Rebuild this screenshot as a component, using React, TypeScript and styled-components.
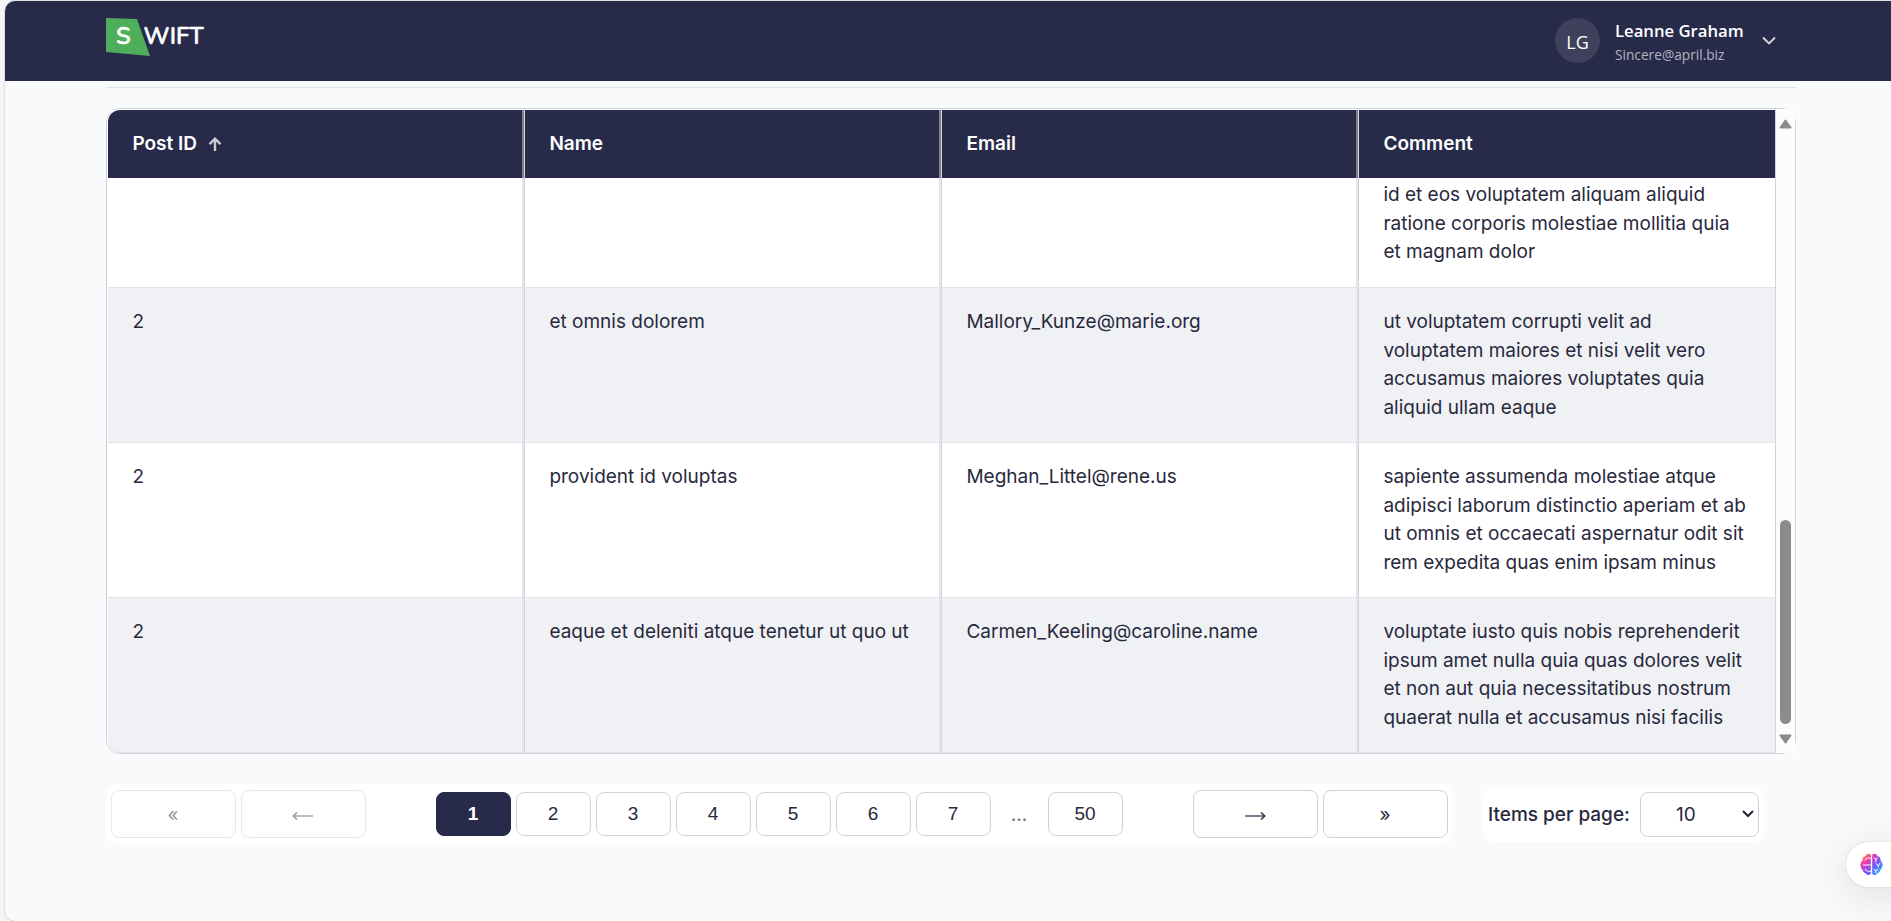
import React from "react";
import styled, { createGlobalStyle } from "styled-components";

const inter = `Inter, "Liberation Sans", sans-serif`;
const segoe = `"Open Sans", "Noto Sans", sans-serif`;

const GlobalStyle = createGlobalStyle`
  * { box-sizing: border-box; }
  html, body { margin: 0; background: #f7f7f8; overflow: hidden; }
  body { font-family: ${inter}; color: #28293d; }
`;

const Shell = styled.div`
  height: 921px;
  padding: 1px 0 0 5px;
  background: #f5f5f6;
  overflow: hidden;
`;

const Page = styled.div`
  position: relative;
  height: 920px;
  background: #f9fafc;
  border-radius: 10px 0 0 10px;
  box-shadow: 0 0 2px rgba(0, 0, 0, 0.3);
  overflow: hidden;
`;

const Header = styled.header`
  height: 80px;
  padding: 0 115px 0 101px;
  background: #282a4a;
  display: flex;
  justify-content: space-between;
`;

const Logo = styled.svg`
  margin-top: 16px;
  display: block;
`;

const LogoText = styled.text`
  font: 600 23.5px Nunito, Lato, sans-serif;
  fill: #fff;
  stroke: #fff;
  stroke-width: 0.5px;
`;

const Profile = styled.div`
  display: flex;
  align-items: center;
  height: 79px;
`;

const Avatar = styled.div`
  width: 45px;
  height: 45px;
  border-radius: 50%;
  background: #3e405c;
  color: #fff;
  font: 18px/48px ${segoe};
  text-align: center;
`;

const Identity = styled.div`
  width: 147px;
  margin-left: 15px;
  padding-top: 5px;
  white-space: nowrap;
`;

const UserName = styled.div`
  font: 600 16.7px/24px ${segoe};
  color: #fff;
`;

const UserMail = styled.div`
  font: 13.7px/24px ${segoe};
  color: #b3b4c0;
`;

const Main = styled.main`
  width: 1690px;
  margin: 6px 0 0 101px;
`;

const Rule = styled.div`
  height: 1px;
  background: #e1e2ea;
`;

const TableFrame = styled.div`
  margin-top: 20px;
  height: 646px;
  border: 1px solid #d1d2da;
  border-radius: 14px;
  display: flex;
`;

const Grid = styled.div`
  width: 1669px;
  padding: 1px 0 0 1px;
  border-right: 1px solid #d1d2da;
  border-radius: 13px 0 0 13px;
  background: #fff;
  overflow: hidden;
`;

const HeadRow = styled.div`
  display: grid;
  grid-template-columns: repeat(4, 417px);
  height: 68px;
  border-top-left-radius: 12px;
  background: #282a4a;
`;

const Row = styled.div<{ $shade?: boolean; $height: number }>`
  display: grid;
  grid-template-columns: repeat(4, 417px);
  height: ${(p) => p.$height}px;
  background: ${(p) => (p.$shade ? "#f0f1f5" : "#fff")};
  border-bottom: 1px solid #e2e3e9;
  &:last-child {
    border-bottom-left-radius: 12px;
  }
`;

const HeadCell = styled.div`
  display: flex;
  align-items: center;
  gap: 11px;
  padding: 0 24.4px 1px;
  font-size: 19px;
  font-weight: 600;
  color: #fff;
  &:not(:last-child) {
    border-right: 1px solid #d5d6dd;
    box-shadow: inset -2px 0 #808190;
  }
`;

const Cell = styled.div<{ $tail?: boolean }>`
  padding: ${(p) => (p.$tail ? "3px" : "20px")} 0 0 24.4px;
  font-size: 19px;
  line-height: 28.5px;
  white-space: pre;
  &:not(:last-child) {
    border-right: 1px solid #d1d2da;
    box-shadow: inset -2px 0 #e5e6eb;
  }
`;

const ScrollTrack = styled.div`
  flex: 1;
  display: flex;
  flex-direction: column;
  align-items: center;
  padding: 10px 0 9px;
  background: #fcfcfc;
`;

const Arrow = styled.svg`
  display: block;
  width: 13px;
  height: 10px;
`;

const Thumb = styled.div`
  width: 11px;
  height: 204px;
  margin: auto 0 10px;
  border-radius: 6px;
  background: #8b8b8b;
`;

const Footer = styled.div`
  display: flex;
  align-items: center;
  margin-top: 30px;
`;

const Pager = styled.nav`
  width: 1346px;
  height: 60px;
  padding: 0 4px 0 5px;
  border-radius: 10px;
  background: #fff;
  display: flex;
  align-items: center;
  justify-content: space-between;
`;

const Group = styled.div`
  display: flex;
  align-items: center;
  gap: 5px;
`;

const StepButton = styled.button<{ $off?: boolean }>`
  width: 125px;
  height: 48px;
  padding: 0 1px 0 0;
  border: 1px solid #d1d2da;
  border-radius: 8px;
  background: #fff;
  color: #28293d;
  font: 19px ${inter};
  opacity: ${(p) => (p.$off ? 0.5 : 1)};
`;

const PageButton = styled.button<{ $active?: boolean }>`
  width: 75px;
  height: 44px;
  padding: 0 1px 1px 0;
  border: 1px solid ${(p) => (p.$active ? "#282a4a" : "#d1d2da")};
  border-radius: 8px;
  background: ${(p) => (p.$active ? "#282a4a" : "#fff")};
  color: ${(p) => (p.$active ? "#fff" : "#28293d")};
  font: ${(p) => (p.$active ? 700 : 400)} 19px "Liberation Sans", sans-serif;
`;

const Dots = styled.span`
  width: 47px;
  padding-right: 1px;
  text-align: center;
  font-size: 19px;
  color: #6c757d;
`;

const PerPage = styled.div`
  width: 281px;
  height: 55px;
  margin-left: 31px;
  padding: 0 5px;
  border-radius: 10px;
  background: #fff;
  display: flex;
  align-items: center;
  justify-content: space-between;
  font-size: 19px;
  font-weight: 500;
  white-space: nowrap;
`;

const Select = styled.div`
  width: 119px;
  height: 45px;
  padding: 0 4px 0 35px;
  border: 1px solid #d1d2da;
  border-radius: 8px;
  display: flex;
  align-items: center;
  justify-content: space-between;
  font-weight: 400;
`;

const Assistant = styled.div`
  position: absolute;
  left: 1841px;
  top: 841px;
  width: 60px;
  height: 45px;
  padding: 11px 0 0 14px;
  border-radius: 23px 0 0 23px;
  background: #fff;
  box-shadow: 0 8px 40px rgba(0, 0, 0, 0.12), 0 0 2px rgba(0, 0, 0, 0.15);
`;

const rows = [
  { id: "", name: "", email: "", height: 110, tail: true, comment: "id et eos voluptatem aliquam aliquid\nratione corporis molestiae mollitia quia\net magnam dolor" },
  { id: "2", name: "et omnis dolorem", email: "Mallory_Kunze@marie.org", height: 155, comment: "ut voluptatem corrupti velit ad\nvoluptatem maiores et nisi velit vero\naccusamus maiores voluptates quia\naliquid ullam eaque" },
  { id: "2", name: "provident id voluptas", email: "Meghan_Littel@rene.us", height: 155, comment: "sapiente assumenda molestiae atque\nadipisci laborum distinctio aperiam et ab\nut omnis et occaecati aspernatur odit sit\nrem expedita quas enim ipsam minus" },
  { id: "2", name: "eaque et deleniti atque tenetur ut quo ut", email: "Carmen_Keeling@caroline.name", height: 155, comment: "voluptate iusto quis nobis reprehenderit\nipsum amet nulla quia quas dolores velit\net non aut quia necessitatibus nostrum\nquaerat nulla et accusamus nisi facilis" },
];

const pages = ["1", "2", "3", "4", "5", "6", "7"];

const LongArrow = ({ flip }: { flip?: boolean }) => (
  <svg width="22" height="10" viewBox="0 0 22 10" fill="none" stroke="#28293d">
    <g transform={flip ? "matrix(-1 0 0 1 22 0)" : undefined}>
      <path d="M1 5H21" strokeWidth="1.2" />
      <path d="M17 1.5L20.8 5L17 8.5" strokeWidth="1.4" />
    </g>
  </svg>
);

const Brain = () => (
  <svg width="23" height="23" viewBox="0 0 24 24">
    <defs>
      <linearGradient id="brain" x1="0.1" y1="0.1" x2="0.9" y2="0.9">
        <stop offset="0" stopColor="#ff9a1f" />
        <stop offset="0.25" stopColor="#f436b4" />
        <stop offset="0.6" stopColor="#7a55f4" />
        <stop offset="1" stopColor="#25b7ff" />
      </linearGradient>
    </defs>
    <path
      fill="url(#brain)"
      d="M11.3 1.8C9.6.2 6.6.8 5.9 3 3.6 3.3 2.2 5.4 2.7 7.6 1.2 8.8.9 10 .9 11 .1 12 .1 13 .9 14 .9 15.500 1.700 16.800 2.700 17.300 2.800 19.400 4.300 20.700 6 21 7 23.300 9.900 23.700 11.300 22ZM12.700 1.800C14.400.200 17.400.800 18.100 3 20.400 3.300 21.800 5.400 21.300 7.600 22.800 8.800 23.100 10 23.100 11 23.900 12 23.900 13 23.100 14 23.100 15.500 22.300 16.800 21.300 17.300 21.200 19.400 19.700 20.700 18 21 17 23.300 14.100 23.700 12.700 22Z"
    />
    <path
      fill="none"
      stroke="#fff"
      strokeWidth="1"
      strokeLinecap="round"
      d="M5.500 7.500C6 5.500 8 4.500 11 5.500M3.500 12.500H11M5.500 17C6 19 8 19.500 11 19M15 5L16.500 7L18 5M16.500 7V9M16.500 11L19 13L21 10.500M19 13V14.500M14.500 17L16.500 18.500L18.500 17M16.500 18.500V20.500"
    />
  </svg>
);

export default function App() {
  return (
    <>
      <GlobalStyle />
      <Shell>
        <Page>
          <Header>
            <Logo width="110" height="42" viewBox="0 0 110 42">
              <path d="M0 1L31 2L44 39L0 35Z" fill="#4fae5a" />
              <LogoText x="10" y="27.3">S</LogoText>
              <LogoText x="37.6" y="27.3" textLength="60">WIFT</LogoText>
            </Logo>
            <Profile>
              <Avatar>LG</Avatar>
              <Identity>
                <UserName>Leanne Graham</UserName>
                <UserMail>Sincere@april.biz</UserMail>
              </Identity>
              <svg width="14" height="9" viewBox="0 0 14 9" fill="none" stroke="#d8d8df" strokeWidth="1.8">
                <path d="M1 1.500L7 7.500L13 1.500" />
              </svg>
            </Profile>
          </Header>
          <Main>
            <Rule />
            <TableFrame>
              <Grid>
                <HeadRow>
                  <HeadCell>
                    Post ID
                    <svg width="14" height="14" viewBox="0 0 14 14" fill="none" stroke="#c9cad2" strokeWidth="2.400">
                      <path d="M7 14V2M1.500 7.200L7 1.700L12.500 7.200" />
                    </svg>
                  </HeadCell>
                  <HeadCell>Name</HeadCell>
                  <HeadCell>Email</HeadCell>
                  <HeadCell>Comment</HeadCell>
                </HeadRow>
                {rows.map((r, i) => (
                  <Row key={i} $shade={i % 2 === 1} $height={r.height}>
                    <Cell>{r.id}</Cell>
                    <Cell>{r.name}</Cell>
                    <Cell>{r.email}</Cell>
                    <Cell $tail={r.tail}>{r.comment}</Cell>
                  </Row>
                ))}
              </Grid>
              <ScrollTrack>
                <Arrow viewBox="0 0 13 10">
                  <path d="M6.500 1.500L11.500 8.500H1.500Z" fill="#8b8b8b" stroke="#8b8b8b" strokeWidth="2" strokeLinejoin="round" />
                </Arrow>
                <Thumb />
                <Arrow viewBox="0 0 13 10">
                  <path d="M6.500 8.500L11.500 1.500H1.500Z" fill="#8b8b8b" stroke="#8b8b8b" strokeWidth="2" strokeLinejoin="round" />
                </Arrow>
              </ScrollTrack>
            </TableFrame>
            <Footer>
              <Pager>
                <Group>
                  <StepButton $off>«</StepButton>
                  <StepButton $off><LongArrow flip /></StepButton>
                </Group>
                <Group>
                  {pages.map((p) => (
                    <PageButton key={p} $active={p === "1"}>{p}</PageButton>
                  ))}
                  <Dots>...</Dots>
                  <PageButton>50</PageButton>
                </Group>
                <Group>
                  <StepButton><LongArrow /></StepButton>
                  <StepButton>»</StepButton>
                </Group>
              </Pager>
              <PerPage>
                Items per page:
                <Select>
                  10
                  <svg width="12" height="8" viewBox="0 0 12 8" fill="none" stroke="#28293d" strokeWidth="2.200">
                    <path d="M1 1L6 6L11 1" />
                  </svg>
                </Select>
              </PerPage>
            </Footer>
          </Main>
          <Assistant>
            <Brain />
          </Assistant>
        </Page>
      </Shell>
    </>
  );
}
